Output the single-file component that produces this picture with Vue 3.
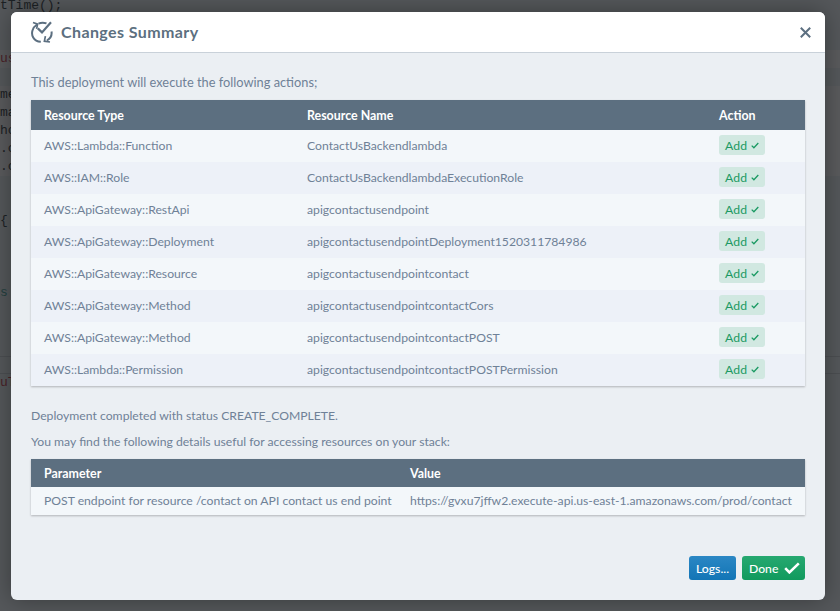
<template>
  <div class="page">
    <div class="code-behind">
      <div
        v-for="(line, i) in codeLines"
        :key="i"
        class="code-line"
        :class="line.cls"
      >{{ line.text }}</div>
    </div>
    <div class="modal">
      <div class="modal-header">
        <svg class="head-icon" width="22" height="22" viewBox="0 0 22 22" fill="none" stroke="#5c6f80" stroke-width="2">
          <path d="M6 3.5C1.5 6.5 -.3 12 2.2 16.5 3.8 19.3 6.5 20.6 9.8 20.8" />
          <path d="M2 1.5l4.6 1.6-1 4.8" stroke-width="1.7" />
          <path d="M7.5 2.6c2.6-1.2 5.4-1.2 8-.2" />
          <path d="M20.5 10.5c.6 3.8-1 7-4.6 9" />
          <path d="M19 21l-5.6-.8 1-5" stroke-width="1.7" />
          <path d="M6.8 7.4l4.2 4L20 1.2" stroke-width="2.2" />
        </svg>
        <span class="head-title">Changes Summary</span>
        <svg class="close" width="11" height="11" viewBox="0 0 11 11" stroke="#5c6f80" stroke-width="2">
          <path d="M.8 .8l9.4 9.4M10.2 .8L.8 10.2" />
        </svg>
      </div>
      <div class="modal-body">
        <p class="intro">This deployment will execute the following actions;</p>
        <table class="res-table">
          <thead>
            <tr>
              <th class="col-type">Resource Type</th>
              <th class="col-name">Resource Name</th>
              <th>Action</th>
            </tr>
          </thead>
          <tbody>
            <tr v-for="r in resources" :key="r.name">
              <td>{{ r.type }}</td>
              <td>{{ r.name }}</td>
              <td>
                <span class="add-badge">
                  Add
                  <svg width="8" height="7" viewBox="0 0 8 7" fill="none" stroke="#1b9a63" stroke-width="1.3">
                    <path d="M.7 3.6l2.2 2.2L7.3 1" />
                  </svg>
                </span>
              </td>
            </tr>
          </tbody>
        </table>
        <p class="status">Deployment completed with status CREATE_COMPLETE.</p>
        <p class="useful">You may find the following details useful for accessing resources on your stack:</p>
        <table class="out-table">
          <thead>
            <tr>
              <th class="col-param">Parameter</th>
              <th>Value</th>
            </tr>
          </thead>
          <tbody>
            <tr>
              <td>POST endpoint for resource /contact on API contact us end point</td>
              <td>https://gvxu7jffw2.execute-api.us-east-1.amazonaws.com/prod/contact</td>
            </tr>
          </tbody>
        </table>
      </div>
      <div class="modal-footer">
        <button class="btn btn-logs">Logs...</button>
        <button class="btn btn-done">
          Done
          <svg width="16" height="12" viewBox="0 0 16 12" fill="none" stroke="#fff" stroke-width="2.6">
            <path d="M1.2 6.2l4.2 4.2L14.8 1.4" />
          </svg>
        </button>
      </div>
    </div>
  </div>
</template>

<script setup>
// the editor that sits behind the modal backdrop, one row per 18px line
const codeLines = [
  { text: 'tTime();', cls: 'first' },
  { text: '' },
  { text: '' },
  { text: 'us', cls: 'red band' },
  { text: '' },
  { text: 'me', cls: 'band' },
  { text: 'ma', cls: 'band' },
  { text: 'ho', cls: 'band' },
  { text: '.c', cls: 'band' },
  { text: '.c', cls: 'band' },
  { text: '' },
  { text: '' },
  { text: '{' },
  { text: '' },
  { text: '' },
  { text: '' },
  { text: 's', cls: 'teal' },
  { text: '' },
  { text: '' },
  { text: '' },
  { text: '', cls: 'rule' },
  { text: 'uT', cls: 'red' }
]

const resources = [
  { type: 'AWS::Lambda::Function', name: 'ContactUsBackendlambda' },
  { type: 'AWS::IAM::Role', name: 'ContactUsBackendlambdaExecutionRole' },
  { type: 'AWS::ApiGateway::RestApi', name: 'apigcontactusendpoint' },
  { type: 'AWS::ApiGateway::Deployment', name: 'apigcontactusendpointDeployment1520311784986' },
  { type: 'AWS::ApiGateway::Resource', name: 'apigcontactusendpointcontact' },
  { type: 'AWS::ApiGateway::Method', name: 'apigcontactusendpointcontactCors' },
  { type: 'AWS::ApiGateway::Method', name: 'apigcontactusendpointcontactPOST' },
  { type: 'AWS::Lambda::Permission', name: 'apigcontactusendpointcontactPOSTPermission' }
]
</script>

<style>
html, body {
  margin: 0;
  background: #55585b;
}
</style>

<style scoped>
.page {
  position: relative;
  width: 840px;
  height: 611px;
  box-sizing: border-box;
  padding: 12px 15px 11px 11px;
  background: #55585b;
  overflow: hidden;
  font-family: Lato, "Noto Sans", sans-serif;
  font-size: 12.2px;
  color: #6f8197;
}

.code-behind {
  position: absolute;
  top: 0;
  left: 0;
  width: 100%;
  font-family: "Liberation Mono", monospace;
  font-size: 13px;
  line-height: 18px;
  color: #1c2124;
}

.code-line {
  height: 18px;
}

.code-line.first {
  height: 14px;
  line-height: 12px;
}

.code-line.band {
  background: #5a5b5d;
}

.code-line.red {
  color: #4a2228;
}

.code-line.teal {
  color: #24403f;
}

.code-line.rule {
  border-top: 1px solid #4c4f52;
  border-bottom: 1px solid #4c4f52;
  box-sizing: border-box;
}

.modal {
  position: relative;
  height: 100%;
  display: flex;
  flex-direction: column;
  background: #ebeff3;
  border-radius: 6px;
  box-shadow: 0 0 24px rgba(0, 0, 0, 0.35);
  overflow: hidden;
}

.modal-header {
  height: 40px;
  flex: none;
  display: flex;
  align-items: center;
  padding: 0 14px 0 20px;
  background: #fff;
  border-bottom: 1px solid #c9d1d9;
}

.head-icon {
  margin-right: 8px;
}

.head-title {
  flex: 1;
  font-size: 16px;
  font-weight: 700;
  letter-spacing: 0.4px;
  line-height: 18px;
  margin-bottom: 1px;
  color: #5c6f80;
}

.modal-body {
  flex: 1;
  padding: 0 20px;
}

.modal-body p {
  margin: 0;
  line-height: 16px;
}

.intro {
  font-size: 12.8px;
  padding: 21px 0 10px;
}

table {
  width: 100%;
  border-collapse: collapse;
  box-shadow: 0 1px 2px rgba(0, 0, 0, 0.25);
  table-layout: fixed;
}

th {
  background: #5c6f80;
  color: #fff;
  text-align: left;
  font-size: 12.4px;
  font-weight: 700;
  padding: 0 0 0 13px;
  height: 30px;
}

td {
  padding: 0 0 2px 13px;
  height: 32px;
  box-sizing: border-box;
  white-space: nowrap;
  background: #f3f7fa;
}

.res-table tbody tr:nth-child(even) td {
  background: #edf1f8;
}

.col-type {
  width: 250px;
}

.col-name {
  width: 399px;
}

.col-param {
  width: 353px;
}

.out-table th {
  height: 28px;
}

.out-table td {
  height: 28px;
}

.add-badge {
  display: inline-flex;
  align-items: center;
  box-sizing: border-box;
  width: 46px;
  gap: 4px;
  height: 20px;
  padding: 0 0 0 6px;
  border-radius: 3px;
  background: #d1e8e1;
  color: #1b9a63;
  letter-spacing: 0.2px;
}

.status {
  padding-top: 22px;
}

.useful {
  padding: 10px 0 9px;
}

.modal-footer {
  flex: none;
  display: flex;
  justify-content: flex-end;
  gap: 6px;
  padding: 0 20px 20px;
}

.btn {
  height: 24px;
  border: none;
  border-radius: 3px;
  color: #fff;
  font-family: inherit;
  font-size: 12.2px;
  font-weight: 500;
  display: inline-flex;
  align-items: center;
}

.btn-logs {
  width: 47px;
  justify-content: center;
  padding: 0;
  background: linear-gradient(#2b87c4, #1275b6);
}

.btn-done {
  width: 63px;
  padding: 0 0 0 7px;
  gap: 6px;
  background: linear-gradient(#26a870, #119a5d);
}
</style>
